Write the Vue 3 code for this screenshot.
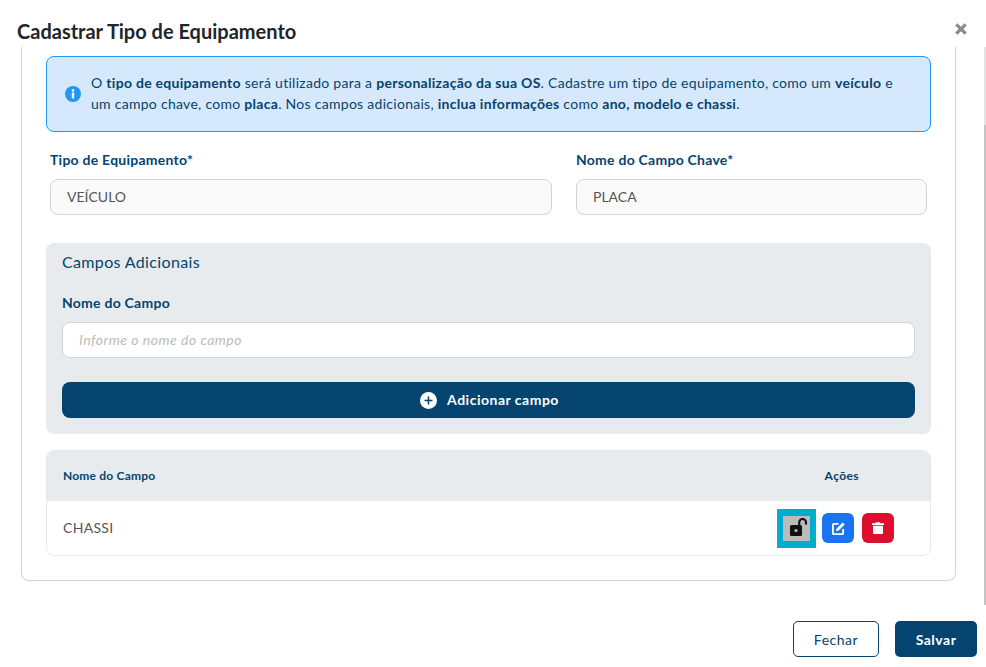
<script setup>
const rows = [{ name: 'CHASSI' }]
</script>

<template>
  <div class="page">
    <header class="head">
      <h1>Cadastrar Tipo de Equipamento</h1>
      <svg class="close" viewBox="0 0 12 12" aria-label="Fechar"><path d="M2 2l8 8M10 2l-8 8" /></svg>
    </header>
    <div class="scroll">
      <div class="track"><div class="thumb"></div></div>
      <section class="frame">
        <div class="alert">
          <svg class="info" viewBox="0 0 16 16"><circle cx="8" cy="8" r="8" fill="#2196f3"/><circle cx="8" cy="4.4" r="1.3" fill="#fff"/><rect x="6.8" y="6.6" width="2.4" height="6" rx=".6" fill="#fff"/></svg>
          <p>O <b>tipo de equipamento</b> será utilizado para a <b>personalização da sua OS</b>. Cadastre um tipo de equipamento, como um <b>veículo</b> e um campo chave, como <b>placa</b>. Nos campos adicionais, <b>inclua informações</b> como <b>ano, modelo e chassi</b>.</p>
        </div>
        <div class="fields">
          <label class="field first">
            <span>Tipo de Equipamento*</span>
            <input value="VEÍCULO" />
          </label>
          <label class="field second">
            <span>Nome do Campo Chave*</span>
            <input value="PLACA" />
          </label>
        </div>
        <div class="extra">
          <h2>Campos Adicionais</h2>
          <label class="field">
            <span>Nome do Campo</span>
            <input class="white" placeholder="Informe o nome do campo" />
          </label>
          <button class="add">
            <svg viewBox="0 0 18 18"><circle cx="9" cy="9" r="9" fill="#fff"/><path d="M9 4.800v8.400M4.800 9h8.400" stroke="#04446f" stroke-width="1.600"/></svg>
            Adicionar campo
          </button>
        </div>
        <div class="table">
          <div class="thead"><span>Nome do Campo</span><span class="acts">Ações</span></div>
          <div v-for="r in rows" :key="r.name" class="row">
            <span class="cell">{{ r.name }}</span>
            <div class="btns">
              <button class="lock">
                <svg viewBox="0 0 18 18"><rect x="0" y="7" width="12" height="11" rx="1.500" fill="#111"/><circle cx="6" cy="12.500" r="1.600" fill="#bbb"/><path d="M9.200 7V4.400a3.400 3.400 0 0 1 6.800 0V6.500" fill="none" stroke="#111" stroke-width="2.200"/></svg>
              </button>
              <button class="edit">
                <svg viewBox="0 0 14 14"><path d="M7 2H2a1 1 0 0 0-1 1v9a1 1 0 0 0 1 1h9a1 1 0 0 0 1-1V7.500" fill="none" stroke="#fff" stroke-width="2"/><path d="M11.500.5l2.200 2.200-6.500 6.500-3 .8.800-3z" fill="#fff"/></svg>
              </button>
              <button class="del">
                <svg viewBox="0 0 12 12"><path d="M0 1.200h3.800V.3h4.400v.9h3.800v1.700H0z M1 3.700h10V11a1 1 0 0 1-1 1H2a1 1 0 0 1-1-1z" fill="#fff"/></svg>
              </button>
            </div>
          </div>
        </div>
      </section>
    </div>
    <footer class="foot">
      <button class="close-btn">Fechar</button>
      <button class="save">Salvar</button>
    </footer>
  </div>
</template>

<style>
html, body { margin: 0; background: #fff; }
</style>

<style scoped>
.page { width: 986px; height: 667px; overflow: hidden; font-family: "Lato", "Noto Sans", sans-serif; color: #555; background: #fff; }
.head { height: 47px; display: flex; align-items: center; justify-content: space-between; padding: 14px 18px 0 17px; box-sizing: border-box; }
h1 { margin: 0; font-size: 20px; font-weight: 700; color: #212529; }
.close { width: 14px; height: 14px; fill: none; stroke: #8a8a8a; stroke-width: 2.800; margin-bottom: 4px; }
.scroll { position: relative; height: 558px; padding-left: 21px; }
.track { position: absolute; right: 0; top: 0; width: 2px; height: 558px; background: #e4e4e4; }
.thumb { margin-top: 78px; height: 480px; background: #c4c4c4; }
.frame { width: 935px; height: 534px; box-sizing: border-box; border: 1px solid #ced4da; border-top: 0; border-radius: 0 0 8px 8px; padding: 9px 24px 0; }
.alert { height: 76px; box-sizing: border-box; border: 1px solid #2196f3; border-radius: 8px; background: #d6e9fc; display: flex; align-items: center; padding: 0 18px 2px; gap: 10px; }
.info { width: 16px; height: 16px; flex: none; margin-top: 2px; }
.alert p { margin: 0; font-size: 14px; line-height: 21px; color: #04446f; letter-spacing: .28px; }
.fields { display: flex; margin-top: 19px; padding: 0 4px; gap: 24px; }
.first { width: 502px; }
.second { width: 351px; }
.field { display: block; }
.field span { display: block; font-size: 14px; font-weight: 700; color: #04446f; line-height: 17px; margin-bottom: 11px; letter-spacing: .25px; }
input { display: block; width: 100%; height: 36px; box-sizing: border-box; border: 1px solid #ced4da; border-radius: 8px; background: #fafafa; padding: 0 16px 2px; font: 14px "Lato", sans-serif; color: #555; }
input.white { background: #fff; }
input::placeholder { font-style: italic; color: #bbb; letter-spacing: .5px; }
.extra { margin-top: 28px; height: 191px; box-sizing: border-box; background: #e8ebee; border-radius: 8px; padding: 9px 16px; }
h2 { margin: 0 0 22px; font-size: 16px; font-weight: 400; line-height: 20px; color: #04446f; letter-spacing: .35px; }
.add { margin-top: 24px; width: 100%; height: 36px; border: 0; border-radius: 8px; padding: 0 0 2px 2px; background: #04446f; color: #fff; font: 700 14px "Lato", sans-serif; letter-spacing: .5px; display: flex; align-items: center; justify-content: center; gap: 10px; }
.add svg { width: 17px; height: 17px; margin-top: 2px; }
.table { margin-top: 16px; height: 106px; box-sizing: border-box; border: 1px solid #e6e8eb; border-radius: 8px; overflow: hidden; }
.thead { height: 50px; background: #e8ebee; display: flex; align-items: center; justify-content: space-between; padding: 0 71px 2px 16px; box-sizing: border-box; font-size: 12px; font-weight: 700; color: #04446f; letter-spacing: .2px; }
.acts { letter-spacing: .4px; }
.row { height: 54px; display: flex; align-items: center; justify-content: space-between; padding: 0 36px 0 16px; font-size: 14px; }
.cell { margin-top: -2px; letter-spacing: .3px; }
.btns { display: flex; align-items: center; gap: 8px; }
.btns button { width: 32px; height: 30px; border: 0; border-radius: 6px; padding: 0; display: flex; align-items: center; justify-content: center; }
.btns svg { width: 13px; height: 13px; }
.btns .del svg { width: 12px; height: 12px; }
.btns .lock { width: 27px; height: 25px; border-radius: 0; background: #bbb; box-sizing: content-box; border: solid #00acd0; border-width: 7px 6px; margin-right: -2px; }
.btns .lock svg { width: 18px; height: 18px; margin-left: 5px; margin-top: -3px; }
.edit { background: #1a73f0; }
.del { background: #dc102e; }
.foot { display: flex; justify-content: flex-end; gap: 16px; padding: 16px 9px 0 0; }
.foot button { height: 36px; border-radius: 5px; font: 700 14px "Lato", sans-serif; box-sizing: border-box; letter-spacing: .5px; }
.close-btn { width: 86px; background: #fff; color: #04446f; font-weight: 400 !important; border: 1px solid #04446f; padding-top: 2px; }
.save { width: 82px; background: #04446f; color: #fff; border: 0; }
</style>
